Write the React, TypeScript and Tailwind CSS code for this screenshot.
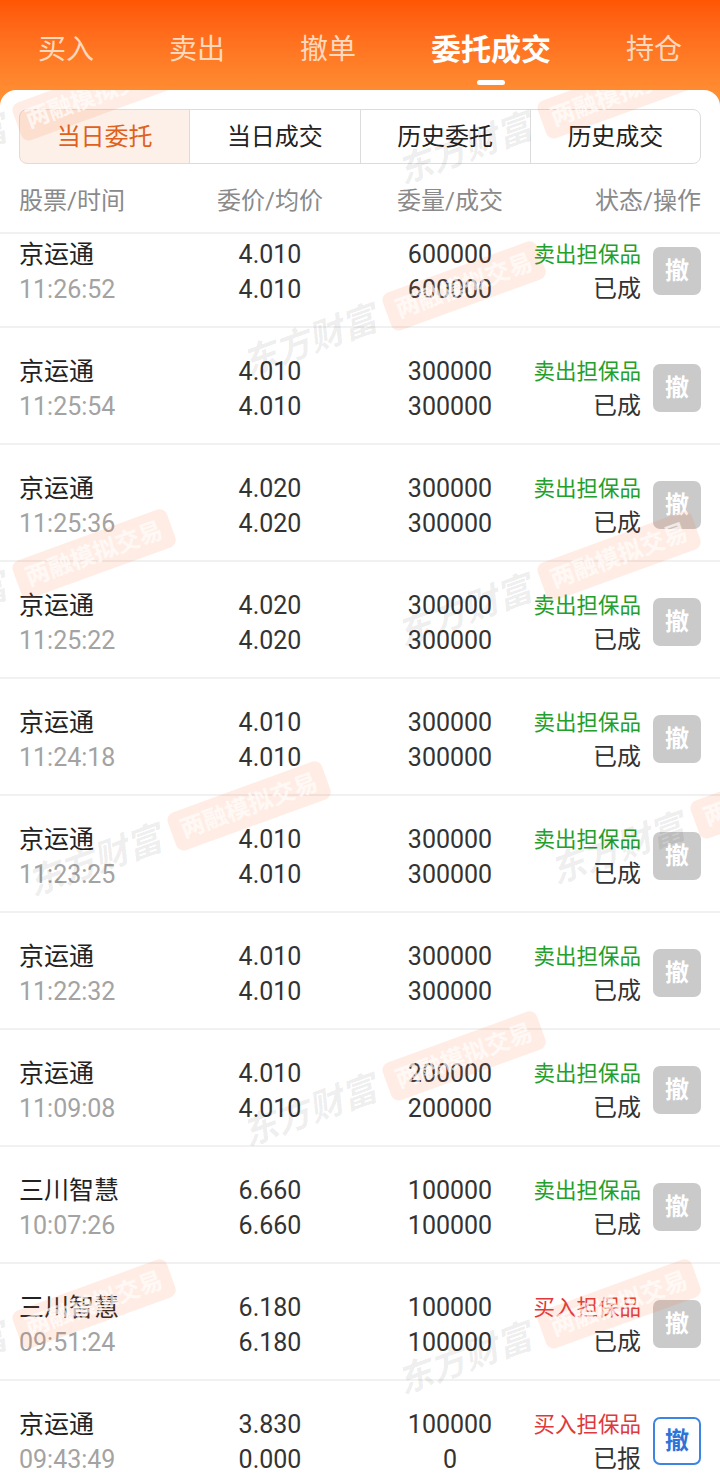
import React from 'react';

type Order = {
  name: string;
  time: string;
  price: string;
  avg: string;
  qty: string;
  done: string;
  side: 'sell' | 'buy';
  status: string;
  cancellable?: boolean;
};

const TOP_TABS = ['买入', '卖出', '撤单', '委托成交', '持仓'];
const SUB_TABS = ['当日委托', '当日成交', '历史委托', '历史成交'];

const ORDERS: Order[] = [
  { name: '京运通', time: '11:26:52', price: '4.010', avg: '4.010', qty: '600000', done: '600000', side: 'sell', status: '已成' },
  { name: '京运通', time: '11:25:54', price: '4.010', avg: '4.010', qty: '300000', done: '300000', side: 'sell', status: '已成' },
  { name: '京运通', time: '11:25:36', price: '4.020', avg: '4.020', qty: '300000', done: '300000', side: 'sell', status: '已成' },
  { name: '京运通', time: '11:25:22', price: '4.020', avg: '4.020', qty: '300000', done: '300000', side: 'sell', status: '已成' },
  { name: '京运通', time: '11:24:18', price: '4.010', avg: '4.010', qty: '300000', done: '300000', side: 'sell', status: '已成' },
  { name: '京运通', time: '11:23:25', price: '4.010', avg: '4.010', qty: '300000', done: '300000', side: 'sell', status: '已成' },
  { name: '京运通', time: '11:22:32', price: '4.010', avg: '4.010', qty: '300000', done: '300000', side: 'sell', status: '已成' },
  { name: '京运通', time: '11:09:08', price: '4.010', avg: '4.010', qty: '200000', done: '200000', side: 'sell', status: '已成' },
  { name: '三川智慧', time: '10:07:26', price: '6.660', avg: '6.660', qty: '100000', done: '100000', side: 'sell', status: '已成' },
  { name: '三川智慧', time: '09:51:24', price: '6.180', avg: '6.180', qty: '100000', done: '100000', side: 'buy', status: '已成' },
  { name: '京运通', time: '09:43:49', price: '3.830', avg: '0.000', qty: '100000', done: '0', side: 'buy', status: '已报', cancellable: true },
];

// watermark anchors (center of 东方财富), relative to the card
const MARKS = [
  { x: -60, y: 62 },
  { x: 465, y: 60 },
  { x: 310, y: 252 },
  { x: -60, y: 520 },
  { x: 465, y: 522 },
  { x: 95, y: 772 },
  { x: 618, y: 760 },
  { x: 310, y: 1022 },
  { x: -60, y: 1270 },
  { x: 465, y: 1270 },
];

const FONT = "font-['Roboto','Noto_Sans_CJK_SC',sans-serif]";

function Watermark({ x, y }: { x: number; y: number }) {
  return (
    <div
      className="absolute flex items-center gap-[12px] origin-[70px_50%] -rotate-[20deg] pointer-events-none whitespace-nowrap"
      style={{ left: x - 70, top: y - 22 }}
    >
      <span className="w-[140px] text-[35px] leading-[44px] font-bold italic text-black/[0.075]">东方财富</span>
      <span className="px-[10px] h-[40px] flex items-center rounded-[8px] bg-[#ff6a2a]/[0.12] text-[24px] font-bold text-white/70">
        两融模拟交易
      </span>
    </div>
  );
}

function CancelButton({ active }: { active?: boolean }) {
  return active ? (
    <div className="shrink-0 ml-[12px] mt-[10px] w-[48px] h-[48px] rounded-[7px] border-2 border-[#3d85e3] flex items-center justify-center text-[24px] font-bold text-[#2d74d8]">
      撤
    </div>
  ) : (
    <div className="shrink-0 ml-[12px] mt-[10px] w-[48px] h-[48px] rounded-[7px] bg-[#cacaca] flex items-center justify-center text-[24px] font-bold text-white">
      撤
    </div>
  );
}

function OrderRow({ o }: { o: Order }) {
  return (
    <div className="h-[117px] border-b-2 border-[#f1f1f1] flex items-start pt-[26px] pl-[19px] pr-[19px]">
      <div className="shrink-0 w-[181px] flex flex-col text-[25px] leading-[35px]">
        <span className="text-[#222]">{o.name}</span>
        <span className="text-[#a3a3a3]">{o.time}</span>
      </div>
      <div className="shrink-0 w-[140px] flex flex-col items-center text-[25px] leading-[35px] text-[#333]">
        <span>{o.price}</span>
        <span>{o.avg}</span>
      </div>
      <div className="shrink-0 w-[220px] flex flex-col items-center text-[25px] leading-[35px] text-[#333]">
        <span>{o.qty}</span>
        <span>{o.done}</span>
      </div>
      <div className="flex-1 min-w-0 flex flex-col items-end whitespace-nowrap">
        <span className={`text-[21.5px] leading-[35px] ${o.side === 'sell' ? 'text-[#22a02a]' : 'text-[#e0393b]'}`}>
          {o.side === 'sell' ? '卖出担保品' : '买入担保品'}
        </span>
        <span className="text-[24px] leading-[35px] text-[#333]">{o.status}</span>
      </div>
      <CancelButton active={o.cancellable} />
    </div>
  );
}

export default function App() {
  return (
    <div className={`w-[720px] h-[1476px] overflow-hidden bg-white ${FONT}`}>
      {/* 顶部导航 */}
      <div className="h-[106px] bg-gradient-to-b from-[#ff5604] to-[#ff9437] pt-[28px]">
        <div className="flex items-center gap-[75px] pl-[38px]">
          {TOP_TABS.map((t) => {
            const active = t === '委托成交';
            return (
              <div key={t} className="relative flex flex-col items-center">
                <span
                  className={
                    active
                      ? 'text-[30px] leading-[44px] font-bold text-white'
                      : 'text-[28px] leading-[44px] text-[#ffd9bd]'
                  }
                >
                  {t}
                </span>
                {active && <span className="absolute top-[52px] w-[28px] h-[5px] rounded-full bg-white" />}
              </div>
            );
          })}
        </div>
      </div>

      {/* 内容卡片 */}
      <div className="relative -mt-[16px] h-[1386px] bg-white rounded-t-[16px] overflow-hidden">
        <div className="pt-[19px] px-[19px]">
          <div className="flex h-[55px] rounded-[8px] border border-[#dcdcdc] overflow-hidden">
            {SUB_TABS.map((t, i) => (
              <div
                key={t}
                className={
                  i === 0
                    ? 'flex-1 flex items-center justify-center text-[24px] bg-[#fdf0e8] text-[#e0611b] border border-[#f3b892] rounded-l-[8px] -m-px'
                    : 'flex-1 flex items-center justify-center text-[24px] text-[#222] border-l border-[#dcdcdc]'
                }
              >
                {t}
              </div>
            ))}
          </div>
        </div>

        {/* 表头 */}
        <div className="h-[70px] flex items-center pt-[6px] px-[19px] text-[24px] text-[#8a8a8a] border-b-2 border-[#f1f1f1]">
          <span className="shrink-0 w-[181px]">股票/时间</span>
          <span className="shrink-0 w-[140px] text-center whitespace-nowrap">委价/均价</span>
          <span className="shrink-0 w-[220px] text-center whitespace-nowrap">委量/成交</span>
          <span className="flex-1 min-w-0 text-right whitespace-nowrap">状态/操作</span>
        </div>

        {/* 列表 */}
        <div className="h-[1242px] overflow-hidden">
          <div className="-mt-[23px]">
            {ORDERS.map((o, i) => (
              <OrderRow key={i} o={o} />
            ))}
          </div>
        </div>

        {MARKS.map((m, i) => (
          <Watermark key={i} x={m.x} y={m.y} />
        ))}
      </div>
    </div>
  );
}
